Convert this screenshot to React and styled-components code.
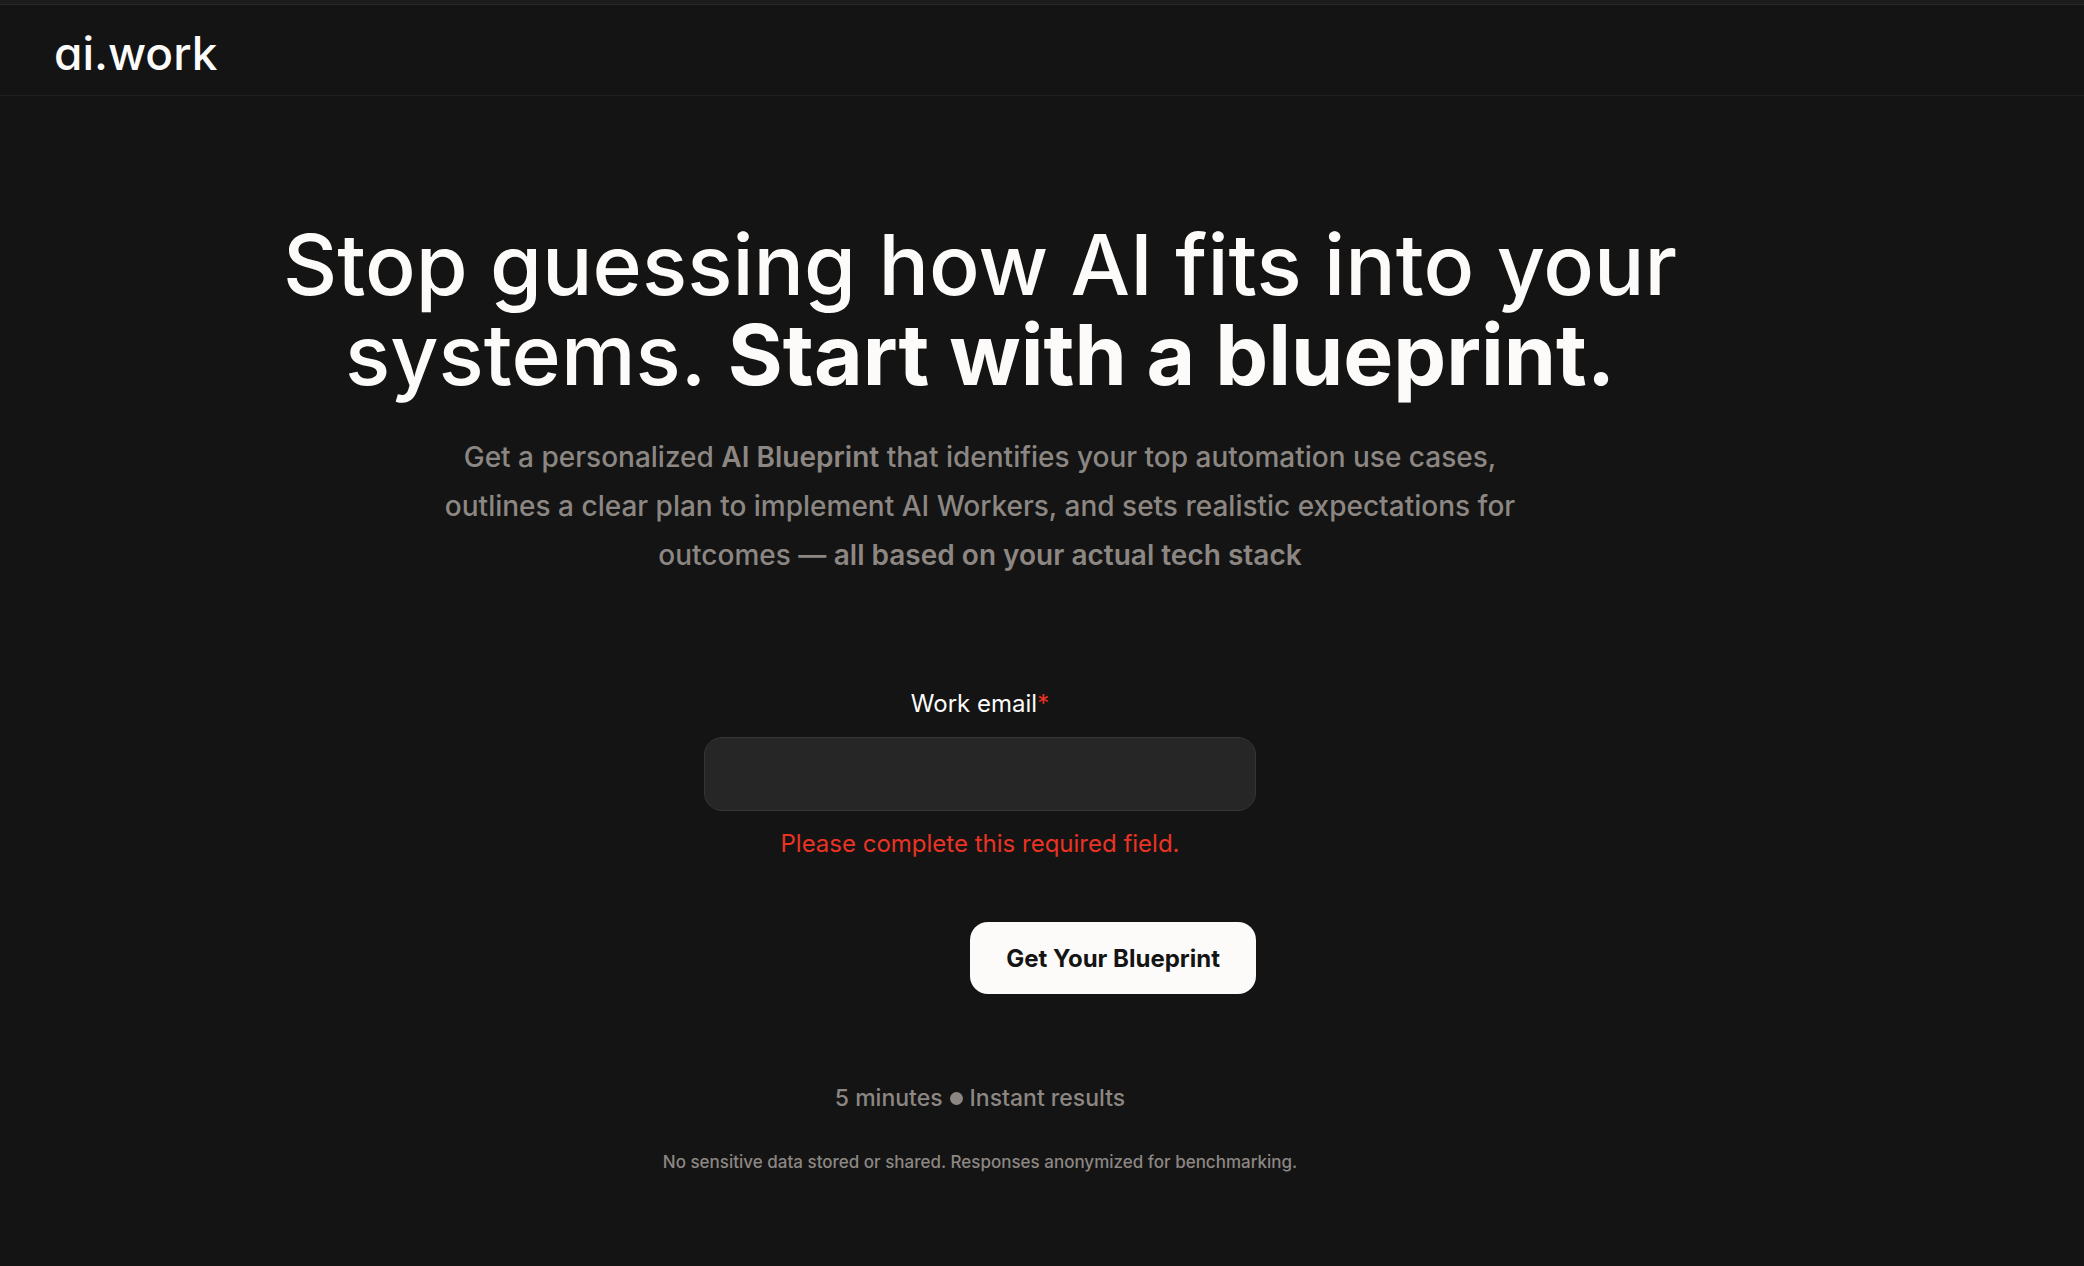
import React from "react";
import styled, { createGlobalStyle } from "styled-components";

const GlobalStyle = createGlobalStyle`
  * { box-sizing: border-box; }
  body {
    margin: 0;
    background: #141414;
    color: #fcfbf9;
    font-family: Inter, "Liberation Sans", sans-serif;
    -webkit-font-smoothing: antialiased;
  }
`;

const Page = styled.div`
  min-height: 100vh;
  display: flex;
  flex-direction: column;
`;

const TopStrip = styled.div`
  height: 5px;
  background: #1c1c1c;
  border-bottom: 1px solid #282828;
`;

const Header = styled.header`
  height: 91px;
  padding: 6px 54px 0;
  display: flex;
  align-items: center;
  border-bottom: 1px solid #1f1f1f;
`;

const Logo = styled.a`
  color: #fcfbf9;
  text-decoration: none;
  font-size: 46px;
  line-height: 48px;
  font-weight: 500;
  font-feature-settings: "cv11", "ss03";
`;

const Main = styled.main`
  padding: 124px 124px 0 0;
  display: flex;
  flex-direction: column;
  align-items: center;
  text-align: center;
`;

const Title = styled.h1`
  margin: 0;
  max-width: 1440px;
  font-size: 84px;
  line-height: 90px;
  font-weight: 500;

  strong { font-weight: 700; }
`;

const Lead = styled.p`
  margin: 33px 0 0;
  max-width: 1120px;
  color: #8c8783;
  font-size: 28px;
  line-height: 49px;
  font-weight: 500;

  strong { font-weight: 600; }
`;

const Form = styled.form`
  width: 552px;
  max-width: 100%;
  margin-top: 106px;
  display: flex;
  flex-direction: column;
`;

const Label = styled.label`
  font-size: 24px;
  line-height: 36px;
`;

const Required = styled.span`
  color: #ea3323;
`;

const Field = styled.input`
  height: 74px;
  margin-top: 15px;
  padding: 0 24px;
  border: 1px solid #353535;
  border-radius: 18px;
  background: #262626;
  color: #fcfbf9;
  font: inherit;
  font-size: 24px;
  outline: none;
`;

const ErrorText = styled.p`
  margin: 15px 0 0;
  color: #ea3323;
  font-size: 24px;
  line-height: 36px;
`;

const Submit = styled.button`
  align-self: flex-end;
  height: 72px;
  margin-top: 60px;
  padding: 0 36px;
  border: 0;
  border-radius: 18px;
  background: #fcfbf9;
  color: #141414;
  font: inherit;
  font-size: 24px;
  font-weight: 700;
  cursor: pointer;
`;

const Facts = styled.p`
  margin: 86px 0 0;
  display: flex;
  align-items: center;
  gap: 7px;
  color: #8c8783;
  font-size: 23px;
  line-height: 36px;
  font-weight: 500;
`;

const Dot = styled.span`
  width: 13px;
  height: 13px;
  border-radius: 50%;
  background: #8c8783;
`;

const Note = styled.p`
  margin: 32px 0 0;
  color: #8c8783;
  font-size: 17px;
  line-height: 28px;
  font-weight: 500;
`;

export default function App() {
  return (
    <>
      <GlobalStyle />
      <Page>
        <TopStrip />
        <Header>
          <Logo href="#">ai.work</Logo>
        </Header>
        <Main>
          <Title>
            Stop guessing how AI fits into your systems. <strong>Start with a blueprint.</strong>
          </Title>
          <Lead>
            Get a personalized <strong>AI Blueprint</strong> that identifies your top automation use
            cases, outlines a clear plan to implement AI Workers, and sets realistic expectations for
            outcomes — <strong>all based on your actual tech stack</strong>
          </Lead>
          <Form noValidate onSubmit={(event) => event.preventDefault()}>
            <Label htmlFor="work-email">
              Work email<Required>*</Required>
            </Label>
            <Field
              id="work-email"
              name="email"
              type="email"
              required
              aria-invalid="true"
              aria-describedby="work-email-error"
            />
            <ErrorText id="work-email-error">Please complete this required field.</ErrorText>
            <Submit type="submit">Get Your Blueprint</Submit>
          </Form>
          <Facts>
            <span>5 minutes</span>
            <Dot />
            <span>Instant results</span>
          </Facts>
          <Note>No sensitive data stored or shared. Responses anonymized for benchmarking.</Note>
        </Main>
      </Page>
    </>
  );
}
